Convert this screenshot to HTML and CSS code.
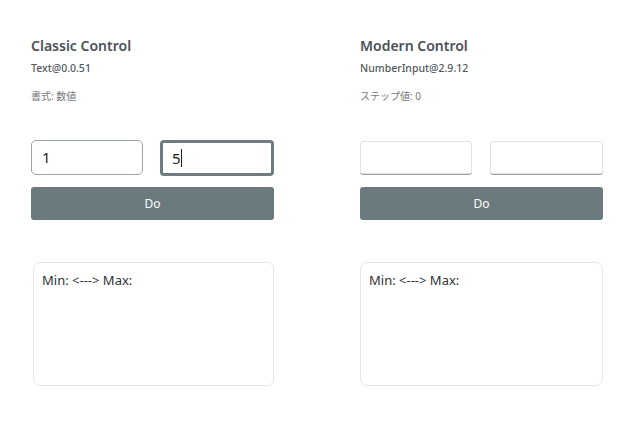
FILE: index.html
```html
<!DOCTYPE html>
<html lang="ja">
<head>
<meta charset="utf-8">
<link rel="stylesheet" href="styles.css">
</head>
<body>
<div class="page">
  <section class="col">
    <h2 class="title">Classic Control</h2>
    <div class="pkg">Text@0.0.51</div>
    <div class="prop">書式: 数値</div>
    <div class="inputs">
      <div class="classic-input">1</div>
      <div class="classic-input focused">5<span class="caret"></span></div>
    </div>
    <div class="btn">Do</div>
    <div class="result">Min: &lt;---&gt; Max:</div>
  </section>
  <section class="col">
    <h2 class="title">Modern Control</h2>
    <div class="pkg">NumberInput@2.9.12</div>
    <div class="prop">ステップ値: 0</div>
    <div class="inputs modern">
      <div class="modern-input"></div>
      <div class="modern-input"></div>
    </div>
    <div class="btn">Do</div>
    <div class="result">Min: &lt;---&gt; Max:</div>
  </section>
</div>
</body>
</html>
```
FILE: styles.css
```css
html, body {
  margin: 0;
  padding: 0;
  background: #ffffff;
}
body {
  font-family: "Noto Sans", "Noto Sans CJK JP", sans-serif;
  color: #333;
}
.page {
  display: grid;
  grid-template-columns: 243px 243px;
  column-gap: 86px;
  padding: 36px 0 0 31px;
}
.col {
  display: flex;
  flex-direction: column;
}
.title {
  margin: 0;
  font-size: 14px;
  font-weight: 600;
  color: #4b5157;
  line-height: 20px;
}
.pkg {
  margin-top: 5px;
  font-size: 10.5px;
  font-weight: 500;
  color: #555a5e;
  line-height: 14px;
}
.prop {
  margin-top: 14px;
  font-size: 10px;
  color: #777;
  line-height: 14px;
}
.inputs {
  display: grid;
  grid-template-columns: 112px 114px;
  column-gap: 17px;
  margin-top: 37px;
  height: 36px;
}
.classic-input {
  box-sizing: border-box;
  height: 35px;
  border: 1px solid #9aa3a6;
  border-radius: 5px;
  padding: 0 10px;
  font-size: 15px;
  line-height: 33px;
  color: #222;
}
.classic-input.focused {
  height: 36px;
  border: 3px solid #6e7c80;
  border-radius: 4px;
  padding: 0 9px;
  line-height: 30px;
}
.caret {
  display: inline-block;
  width: 1px;
  height: 18px;
  background: #222;
  vertical-align: middle;
  margin-top: -3px;
}
.inputs.modern {
  grid-template-columns: 112px 113px;
  column-gap: 18px;
  margin-top: 38px;
  height: 35px;
}
.modern-input {
  box-sizing: border-box;
  height: 33px;
  border: 1px solid #e2e2e2;
  border-radius: 3px;
  box-shadow: 0 1px 0 #a0a0a0;
}
.btn {
  margin-top: 11px;
  height: 33px;
  background: #6b7a7d;
  border-radius: 3px;
  color: #fff;
  font-size: 12px;
  line-height: 33px;
  text-align: center;
}
.result {
  margin-top: 42px;
  box-sizing: border-box;
  height: 124px;
  border: 1px solid #e3e5e6;
  border-radius: 7px;
  padding: 8px 8px;
  font-size: 13px;
  color: #333;
  line-height: 18px;
}
.col:first-child .result {
  margin-left: 2px;
}
```
